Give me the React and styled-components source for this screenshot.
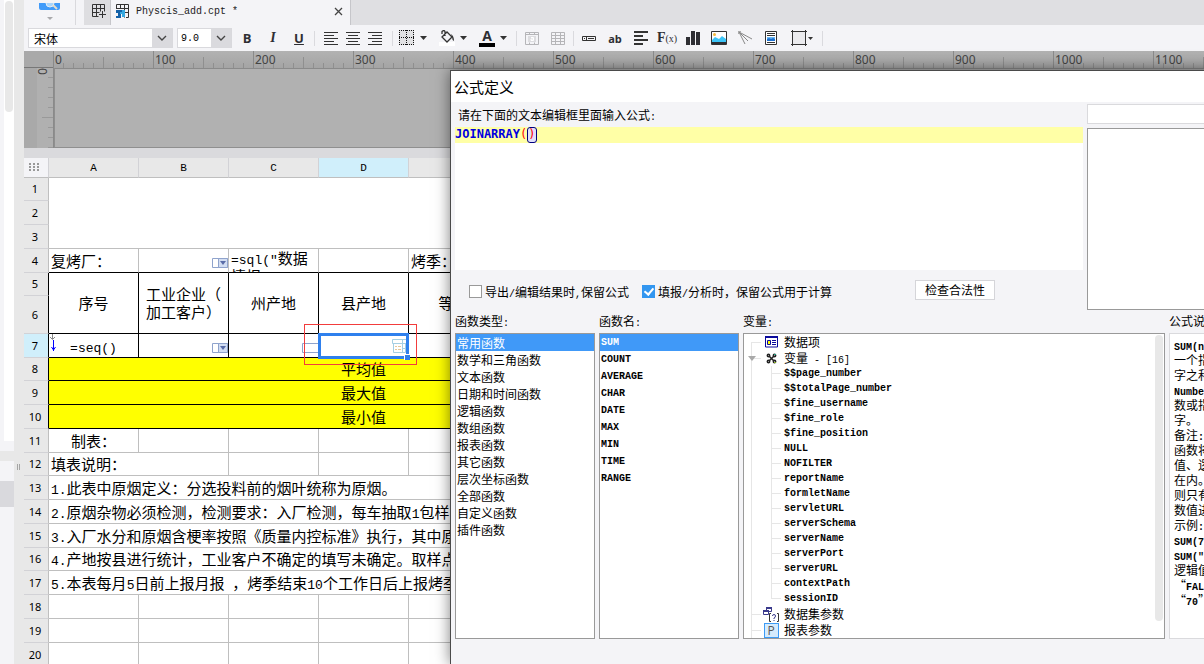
import React from "react";
import styled, { createGlobalStyle } from "styled-components";

const functionTypes = [
  "常用函数", "数学和三角函数", "文本函数", "日期和时间函数", "逻辑函数", "数组函数",
  "报表函数", "其它函数", "层次坐标函数", "全部函数", "自定义函数", "插件函数",
];

const functionNames = ["SUM", "COUNT", "AVERAGE", "CHAR", "DATE", "MAX", "MIN", "TIME", "RANGE"];

const variables = [
  "$$page_number", "$$totalPage_number", "$fine_username", "$fine_role", "$fine_position",
  "NULL", "NOFILTER", "reportName", "formletName", "servletURL", "serverSchema",
  "serverName", "serverPort", "serverURL", "contextPath", "sessionID",
];

const description = [
  "SUM(n", "一个指", "字之和", "Numbe", "数或指", "字。", "备注:", "函数将", "值、逻", "在内。",
  "则只有", "数值进", "示例:", "SUM(7", 'SUM("', "逻辑值", "“FAL", "“70”",
];

const notes = [
  { row: 13, height: 24, text: "1.此表中原烟定义：分选投料前的烟叶统称为原烟。" },
  { row: 14, height: 24, text: "2.原烟杂物必须检测，检测要求：入厂检测，每车抽取1包样" },
  { row: 15, height: 24, text: "3.入厂水分和原烟含梗率按照《质量内控标准》执行，其中原" },
  { row: 16, height: 23, text: "4.产地按县进行统计，工业客户不确定的填写未确定。取样点" },
  { row: 17, height: 24, text: "5.本表每月5日前上报月报 ，烤季结束10个工作日后上报烤季" },
];

// half-width characters are set in a smaller mono face than the CJK text
function Mixed({ children, size = 10, bold }) {
  return children.split(/([\x20-\x7e]+)/).map((part, i) =>
    i % 2 ? <Latin key={i} $size={size} $bold={bold}>{part}</Latin> : part
  );
}

export default function App() {
  return (
    <>
      <GlobalStyle />
      <Screen>
        <SidePanel />
        <Designer>
          <TabBar />
          <Toolbar />
          <RulerArea />
          <Gutter />
          <Sheet />
        </Designer>
        <FormulaDialog />
      </Screen>
    </>
  );
}

function SidePanel() {
  return (
    <Side>
      <SideTop>
        <SideTrack><SideThumb /></SideTrack>
      </SideTop>
      <SideBar $height={10} $color="#f4f4f7" />
      <SideBar $height={10} $color="#e8e8e8" />
      <SideBar $height={20} $color="#f4f4f7" />
      <SideBar $height={26} $color="#d9d9dd" />
      <SideRest />
      <Splitter><i /><i /></Splitter>
    </Side>
  );
}

function TabBar() {
  return (
    <Tabs>
      <Preview type="button" aria-label="预览">
        <svg width="22" height="20" viewBox="0 0 22 20">
          <path d="M0 0h21v5q0 2-2 2H2q-2 0-2-2z" fill="#419bf9" />
          <circle cx="11" cy="0" r="4" fill="#a9d5fb" stroke="#e7edf2" />
          <path d="M14 2l4 4" stroke="#e7dcc9" strokeWidth="2" />
          <path d="M8 14h6l-3 3z" fill="#a9a9ac" />
        </svg>
      </Preview>
      <TabDivider />
      <NewTab type="button" aria-label="新建">
        <svg width="15" height="15" viewBox="0 0 15 15" fill="none" stroke="#333">
          <path d="M.5.5h12v7M.5.5v12h6M.5 4.5h12M.5 8.5h7M4.5.5v12M8.5.5v7M10.5 7v7M7 10.5h7" />
        </svg>
      </NewTab>
      <ActiveTab>
        <svg width="14" height="14" viewBox="0 0 14 14" fill="none">
          <path d="M.5 5V.5h12v13H10M.5 4.5h12M4.5.5v4M8.5.5v13M8 8.5h5" stroke="#333" />
          <path d="M0 6h7v3H5v5H0v-2h2V9H0z" fill="#1261a8" />
          <path d="M6 6h3v7H6v-3H4V8h2z" fill="#35a8e0" />
        </svg>
        <TabTitle>Physcis_add.cpt *</TabTitle>
        <CloseTab type="button" aria-label="关闭">
          <svg width="9" height="9" viewBox="0 0 9 9" stroke="#444" strokeWidth="1.3">
            <path d="M1 1l7 7M8 1l-7 7" />
          </svg>
        </CloseTab>
      </ActiveTab>
    </Tabs>
  );
}

const Caret = () => (
  <svg width="7" height="4" viewBox="0 0 7 4"><path d="M0 0h7L3.500 4z" fill="#333" /></svg>
);

const Chevron = () => (
  <svg width="20" height="18" viewBox="0 0 20 18" fill="none" stroke="#444" strokeWidth="1.4">
    <path d="M6 7l4 4 4-4" />
  </svg>
);

function AlignIcon({ type }) {
  const short = { left: "M0 3.500h10M0 9.500h10", center: "M2 3.500h10M2 9.500h10", right: "M4 3.500h10M4 9.500h10" };
  return (
    <svg width="14" height="13" viewBox="0 0 14 13" stroke="#333">
      <path d={"M0 .5h14M0 6.500h14M0 12.500h14" + short[type]} />
    </svg>
  );
}

function Toolbar() {
  return (
    <Bar>
      <Combo $width={145}>
        <select aria-label="字体" defaultValue="宋体"><option>宋体</option></select>
        <Chevron />
      </Combo>
      <Combo $width={55} $mono>
        <select aria-label="字号" defaultValue="9.0"><option>9.0</option></select>
        <Chevron />
      </Combo>
      <Group>
        <Tool type="button"><b>B</b></Tool>
        <Tool type="button"><Italic>I</Italic></Tool>
        <Tool type="button"><Underlined>U</Underlined></Tool>
      </Group>
      <Sep />
      <AlignGroup>
        <AlignTool type="button" aria-label="左对齐"><AlignIcon type="left" /></AlignTool>
        <AlignTool type="button" aria-label="居中"><AlignIcon type="center" /></AlignTool>
        <AlignTool type="button" aria-label="右对齐"><AlignIcon type="right" /></AlignTool>
      </AlignGroup>
      <Sep />
      <DropGroup>
        <DropTool type="button" aria-label="边框">
          <svg width="16" height="16" viewBox="0 0 16 16" shapeRendering="crispEdges">
            <path d="M0 0h15v15H0z" fill="#e2e2e4" />
            <path d="M0 .5h15M0 7.500h15M0 14.500h15M.5 0v15M7.500 0v15M14.500 0v15" stroke="#111" strokeDasharray="1 1" />
          </svg>
          <Caret />
        </DropTool>
        <DropTool type="button" aria-label="背景色">
          <svg width="16" height="16" viewBox="0 0 16 16" fill="none" stroke="#333">
            <path d="M0 12h16v4H0z" fill="#fff" stroke="none" />
            <path d="M3 7l5-5 5 5-5 5zM3 4V1.500q2-2 3 0V6" strokeWidth="1.300" />
            <path d="M12 4q3 2 3 7-2-1-2-4z" fill="#333" stroke="none" />
          </svg>
          <Caret />
        </DropTool>
        <DropTool type="button" aria-label="文字颜色">
          <LetterA>A</LetterA>
          <Caret />
        </DropTool>
      </DropGroup>
      <Sep />
      <Group>
        <Tool type="button" aria-label="合并单元格">
          <svg width="14" height="13" viewBox="0 0 14 13" fill="none" stroke="#b5b5b8">
            <path d="M.5 .5h13v12H.5zM.5 2.500h13M4.500 .5v2M9.500 .5v2M4.500 10.500v2M9.500 10.500v2" />
            <path d="M3 4h8v6H3z" fill="#dcdcdf" stroke="none" />
            <path d="M6 5.500h2.500v3H6V7h2" stroke="#fff" />
          </svg>
        </Tool>
        <Tool type="button" aria-label="拆分单元格">
          <svg width="14" height="13" viewBox="0 0 14 13" fill="none" stroke="#b5b5b8">
            <path d="M.5 .5h13v12H.5zM.5 3.500h13M.5 6.500h13M.5 9.500h13M4.500 .5v12M9.500 .5v12" />
          </svg>
        </Tool>
      </Group>
      <Sep />
      <Group>
        <Tool type="button" aria-label="控件">
          <svg width="14" height="5" viewBox="0 0 14 5" fill="none" stroke="#333">
            <path d="M.5 .5h13v4H.5zM4.500 .5v4M6 2.500h6M2 2.500h1" />
          </svg>
        </Tool>
        <Tool type="button"><SmallLabel>ab</SmallLabel></Tool>
        <Tool type="button" aria-label="富文本">
          <svg width="14" height="14" viewBox="0 0 14 14" stroke="#333" strokeWidth="2">
            <path d="M0 1h14M0 5h9M0 9h14M0 13h9" />
          </svg>
        </Tool>
        <Tool type="button"><Fx>F<small>(x)</small></Fx></Tool>
        <Tool type="button" aria-label="图表">
          <svg width="14" height="14" viewBox="0 0 14 14" fill="#2e2e33">
            <path d="M0 6h4v8H0zM5 0h4v14H5zM10 1h4v13h-4z" />
          </svg>
        </Tool>
        <Tool type="button" aria-label="图片">
          <svg width="16" height="14" viewBox="0 0 16 14">
            <path d="M.5 .5h15v13H.5z" fill="#fff" stroke="#333" />
            <path d="M1 11V9l3-3 4 2 3-3 4 3v3z" fill="#3cc4f7" />
            <path d="M1 11h14v2H1z" fill="#2e2e33" />
            <circle cx="3.500" cy="3.500" r="1.500" fill="#f5b83d" />
          </svg>
        </Tool>
        <Tool type="button" aria-label="斜线">
          <svg width="14" height="14" viewBox="0 0 14 14" fill="none" stroke="#888">
            <path d="M1 1l6 12M1 1l13 7M1 1l9 9" />
            <path d="M0 .5h3M.5 0v3" stroke="#aaa" />
          </svg>
        </Tool>
        <Tool type="button" aria-label="子报表">
          <svg width="12" height="14" viewBox="0 0 12 14" fill="none" stroke="#333">
            <path d="M.5 .5h11v13H.5z" fill="#fff" />
            <path d="M2 2.500h8M2 4.500h8M2 11.500h8" />
            <path d="M2 6h8v4H2z" fill="#6bb8f5" stroke="none" />
            <path d="M2 10V8l2-1 2 1 2-1 2 1v2z" fill="#1a6fd0" stroke="none" />
          </svg>
        </Tool>
        <Tool type="button" aria-label="悬浮元素" $width={34}>
          <svg width="22" height="16" viewBox="0 0 22 16" fill="none" stroke="#333">
            <path d="M1.500 1.500h13v13h-13z" fill="#ebebee" />
            <path d="M0 1.500h16M0 14.500h16M1.500 0v16M14.500 0v16" />
            <path d="M17 7h5l-2.500 3z" fill="#333" stroke="none" />
          </svg>
        </Tool>
      </Group>
      <Sep />
    </Bar>
  );
}

function RulerArea() {
  return (
    <Rulers>
      <RulerCorner />
      <TopRuler>
        {[...Array(12)].map((_, i) => <span key={i}>{i * 100}</span>)}
      </TopRuler>
      <LeftRuler><span>0</span></LeftRuler>
      <Canvas />
    </Rulers>
  );
}

const ComboWidget = () => (
  <Widget>
    <svg width="16" height="11" viewBox="0 0 16 11">
      <path d="M.5 .5h15v9H.5z" fill="#fff" stroke="#8fa3cc" />
      <path d="M6.500 .5h9v9h-9z" fill="#d3def2" stroke="#8fa3cc" />
      <path d="M8 3h6l-3 4z" fill="#5a6da8" />
    </svg>
  </Widget>
);

function Sheet() {
  return (
    <Table>
      <colgroup>
        <HeadCol />
        {[...Array(7)].map((_, i) => <DataCol key={i} />)}
      </colgroup>
      <thead>
        <tr>
          <Corner>
            <svg width="11" height="9" viewBox="0 0 11 9" fill="#999">
              <path d="M0 0h2v2H0zM4 0h2v2H4zM8 0h2v2H8zM0 3h2v2H0zM4 3h2v2H4zM8 3h2v2H8zM0 6h2v2H0zM4 6h2v2H4zM8 6h2v2H8z" />
            </svg>
          </Corner>
          {["A", "B", "C", "D", "E", "F", "G"].map((c) => (
            <ColHead key={c} $active={c === "D"}>{c}</ColHead>
          ))}
        </tr>
      </thead>
      <tbody>
        <tr><RowHead $height={23}>1</RowHead><Cell colSpan={7} rowSpan={3} /></tr>
        <tr><RowHead $height={24}>2</RowHead></tr>
        <tr><RowHead $height={24}>3</RowHead></tr>
        <tr>
          <RowHead $height={24}>4</RowHead>
          <Cell $under>复烤厂：</Cell>
          <Cell $under><ComboWidget /></Cell>
          <Cell $under><Clip><Mixed size={13}>{'=sql("数据'}</Mixed><br /><Mixed size={13}>{'情报","'}</Mixed></Clip></Cell>
          <Cell $under />
          <Cell $under>烤季：</Cell>
          <Cell $under />
          <Cell $under />
        </tr>
        <tr>
          <RowHead $height={23} $dark>5</RowHead>
          <Cell rowSpan={2} $dark $center>序号</Cell>
          <Cell rowSpan={2} $dark $center>工业企业（<br />加工客户）</Cell>
          <Cell rowSpan={2} $dark $center>州产地</Cell>
          <Cell rowSpan={2} $dark $center>县产地</Cell>
          <Cell rowSpan={2} $dark $center>等级</Cell>
          <Cell rowSpan={2} $dark />
          <Cell rowSpan={2} $dark />
        </tr>
        <tr><RowHead $height={38} $dark>6</RowHead></tr>
        <tr>
          <RowHead $height={24} $dark $active>7</RowHead>
          <Cell $dark $center>
            <ExpandMark>
              <svg width="8" height="18" viewBox="0 0 8 18" fill="none">
                <path d="M3.500 0v5M1 3l2.500 2.500L6 3" stroke="#888" />
                <path d="M4.500 6v11M2.500 13l2 3 2-3" stroke="#00f" />
              </svg>
            </ExpandMark>
            <Mixed size={13}>=seq()</Mixed>
          </Cell>
          <Cell $dark><ComboWidget /></Cell>
          <Cell $dark>
            <Widget>
              <svg width="16" height="11" viewBox="0 0 16 11">
                <path d="M.5 .5h16v9H.5z" fill="#fff" stroke="#8fa3cc" />
              </svg>
            </Widget>
          </Cell>
          <Cell $dark>
            <Widget>
              <svg width="16" height="15" viewBox="0 0 16 15" fill="none" stroke="#a5cfe3">
                <path d="M.5 .5h14v4H.5zM10.500 .5v13M1.500 4.500v9h12v-9M11 9.500h3" />
                <path d="M3 7.500h2M6 7.500h3M3 10.500h2M6 10.500h3" stroke="#e5c79a" />
              </svg>
            </Widget>
            <Selection />
            <RedMark />
          </Cell>
          <Cell $dark /><Cell $dark /><Cell $dark />
        </tr>
        <tr><RowHead $height={23} $dark>8</RowHead><Cell colSpan={7} $dark $center $yellow>平均值</Cell></tr>
        <tr><RowHead $height={24} $dark>9</RowHead><Cell colSpan={7} $dark $center $yellow>最大值</Cell></tr>
        <tr><RowHead $height={24} $dark>10</RowHead><Cell colSpan={7} $dark $center $yellow>最小值</Cell></tr>
        <tr>
          <RowHead $height={24}>11</RowHead>
          <Cell $center>制表：</Cell>
          <Cell /><Cell /><Cell /><Cell /><Cell /><Cell />
        </tr>
        <tr>
          <RowHead $height={23}>12</RowHead>
          <Cell colSpan={2}>填表说明：</Cell>
          <Cell /><Cell /><Cell /><Cell /><Cell />
        </tr>
        {notes.map((n) => (
          <tr key={n.row}>
            <RowHead $height={n.height}>{n.row}</RowHead>
            <Cell colSpan={7}><Mixed size={13}>{n.text}</Mixed></Cell>
          </tr>
        ))}
        {[18, 19, 20].map((n) => (
          <tr key={n}>
            <RowHead $height={24}>{n}</RowHead>
            <Cell /><Cell /><Cell /><Cell /><Cell /><Cell /><Cell />
          </tr>
        ))}
      </tbody>
    </Table>
  );
}

function FormulaDialog() {
  return (
    <Dialog role="dialog" aria-labelledby="formula-title">
      <DialogTitle id="formula-title">公式定义</DialogTitle>
      <Upper>
        <EditorSide>
          <EditorLabel id="editor-label"><Mixed>请在下面的文本编辑框里面输入公式:</Mixed></EditorLabel>
          <Editor role="textbox" aria-labelledby="editor-label" contentEditable suppressContentEditableWarning>
            <EditorLine>JOINARRAY<Paren>(</Paren><Matched>)</Matched></EditorLine>
          </Editor>
          <Options>
            <Check>
              <input type="checkbox" />
              <span><Mixed>导出/编辑结果时,保留公式</Mixed></span>
            </Check>
            <Check>
              <input type="checkbox" defaultChecked />
              <span><Mixed>填报/分析时，保留公式用于计算</Mixed></span>
            </Check>
            <CheckButton type="button">检查合法性</CheckButton>
          </Options>
        </EditorSide>
        <SearchSide>
          <Search type="text" aria-label="搜索" />
          <Results />
        </SearchSide>
      </Upper>
      <Lower>
        <Column>
          <Caption><Mixed>函数类型:</Mixed></Caption>
          <List>
            {functionTypes.map((t, i) => (
              <li key={t}><Item type="button" $selected={i === 0}>{t}</Item></li>
            ))}
          </List>
        </Column>
        <Column>
          <Caption><Mixed>函数名:</Mixed></Caption>
          <List>
            {functionNames.map((t, i) => (
              <li key={t}><NameItem type="button" $selected={i === 0}>{t}</NameItem></li>
            ))}
          </List>
        </Column>
        <Column>
          <Caption><Mixed>变量:</Mixed></Caption>
          <TreePanel>
            <Tree>
              <TreeNode>
                <NodeIcon>
                  <svg width="13" height="12" viewBox="0 0 13 12" fill="none">
                    <path d="M.5 1h12v10H.5z" fill="#fff" stroke="#0a0a9c" />
                    <path d="M0 1h13" stroke="#0a0a9c" strokeWidth="2" />
                    <path d="M2.500 4.500h3v4h-3z" fill="#ff0" stroke="#0a0a9c" />
                    <path d="M7 4.500h4M7 6.500h4M7 8.500h4" stroke="#0a0a9c" />
                  </svg>
                </NodeIcon>
                数据项
              </TreeNode>
              <TreeNode>
                <NodeIcon>
                  <svg width="11" height="11" viewBox="0 0 11 11" fill="none" stroke="#222" strokeWidth="1.500">
                    <circle cx="2.500" cy="2.500" r="1.200" />
                    <circle cx="8.500" cy="2.500" r="1.200" />
                    <circle cx="2.500" cy="8.500" r="1.200" />
                    <circle cx="8.500" cy="8.500" r="1.200" />
                    <path d="M3 3l5 5M8 3L3 8" />
                    <path d="M9 1v1" stroke="#2b9" />
                    <path d="M9 9v1" stroke="#ad2" />
                  </svg>
                </NodeIcon>
                <span><Mixed>变量 - [16]</Mixed></span>
                <Toggle type="button" aria-label="折叠">
                  <svg width="8" height="5" viewBox="0 0 8 5"><path d="M0 0h8L4 5z" fill="#a9a9a9" /></svg>
                </Toggle>
              </TreeNode>
              <Leaves>
                {variables.map((v) => <Leaf key={v}>{v}</Leaf>)}
              </Leaves>
              <TreeNode>
                <NodeIcon>
                  <svg width="16" height="15" viewBox="0 0 16 15" fill="none" stroke="#3a3a8c">
                    <path d="M3.500 1.500h5v3h-5zM.5 4.500h5v3h-5z" fill="#fff" />
                    <path d="M3 1h6M0 4h6" strokeWidth="2" />
                    <path d="M8 6.500H6.500v8H8M14 6.500h1.500v8H14" stroke="#333" />
                    <path d="M9.500 9q0-1.500 1.500-1.500t1.500 1.500-1.500 2v1M11 13v1" />
                  </svg>
                </NodeIcon>
                数据集参数
              </TreeNode>
              <TreeNode>
                <NodeIcon><ParamBadge>P</ParamBadge></NodeIcon>
                报表参数
              </TreeNode>
            </Tree>
            <TreeTrack><TreeThumb /></TreeTrack>
          </TreePanel>
        </Column>
        <Column>
          <Caption>公式说明</Caption>
          <Description>
            {description.map((line, i) => <p key={i}><Mixed bold>{line}</Mixed></p>)}
          </Description>
        </Column>
      </Lower>
    </Dialog>
  );
}

const cjk = '"Noto Sans CJK SC", sans-serif';
const mono = '"Liberation Mono", "Noto Sans CJK SC", monospace';

const GlobalStyle = createGlobalStyle`
  * {
    box-sizing: border-box;
  }

  body {
    margin: 0;
    font-family: ${cjk};
    font-size: 12px;
    color: #000;
    background: #f4f4f7;
  }

  button {
    border: 0;
    padding: 0;
    background: none;
    font: inherit;
    color: inherit;
  }

  ul, p {
    margin: 0;
    padding: 0;
    list-style: none;
  }

  svg {
    display: block;
    flex: none;
  }
`;

const Latin = styled.span`
  font-family: ${mono};
  font-size: ${(p) => p.$size}px;
  font-weight: ${(p) => (p.$bold ? 700 : 400)};
  line-height: 1;
`;

const Screen = styled.div`
  display: flex;
  position: relative;
  height: 100vh;
  overflow: hidden;
`;

// SIDE PANEL

const Side = styled.div`
  display: grid;
  grid-template-columns: 14px 10px;
  grid-template-rows: 441px 10px 10px 20px 26px 1fr;
  flex: none;
`;

const SideTop = styled.div`
  background: #f4f4f7;
  padding-left: 4px;
`;

const SideTrack = styled.div`
  height: 100%;
  padding: 1px;
  background: #fff;
`;

const SideThumb = styled.div`
  height: 111px;
  border-radius: 4px;
  background: #e8e8e8;
`;

const SideBar = styled.div`
  grid-column: 1;
  height: ${(p) => p.$height}px;
  background: ${(p) => p.$color};
`;

const SideRest = styled.div`
  grid-column: 1;
  background: #f4f4f7;
`;

const Splitter = styled.div`
  grid-column: 2;
  grid-row: 1 / -1;
  display: flex;
  gap: 1px;
  padding: 464px 0 0 3px;
  background: #e8e8e8;

  i {
    width: 1px;
    height: 6px;
    background: #a5a5a5;
  }
`;

const Designer = styled.div`
  display: flex;
  flex-direction: column;
  flex: 1;
  min-width: 0;
`;

// TABS

const Tabs = styled.div`
  display: flex;
  height: 25px;
  flex: none;
  background: #dfdfe2;
`;

const Preview = styled.button`
  width: 51px;
  padding-left: 15px;
  background: #f4f4f7;
`;

const TabDivider = styled.div`
  width: 9px;
  background: #f4f4f7;
  border-left: 1px solid #d9d9dd;
`;

const NewTab = styled.button`
  display: flex;
  width: 27px;
  padding: 4px 0 0 8px;
  background: #dedee1;
  border-right: 1px solid #c6c6ca;
`;

const ActiveTab = styled.div`
  display: flex;
  align-items: center;
  width: 240px;
  padding: 0 7px 3px 5px;
  background: #f4f4f7;
  border-right: 1px solid #c6c6ca;
`;

const TabTitle = styled.span`
  flex: 1;
  padding-left: 6px;
  font-family: ${mono};
  font-size: 10px;
  color: #222;
`;

const CloseTab = styled.button`
  width: 9px;
  height: 9px;
`;

// TOOLBAR

const Bar = styled.div`
  display: flex;
  align-items: center;
  height: 26px;
  flex: none;
  padding-left: 4px;
  background: #f4f4f7;
`;

const Combo = styled.div`
  display: flex;
  width: ${(p) => p.$width}px;
  height: 20px;
  margin-right: ${(p) => (p.$mono ? 3 : 4)}px;
  border: 1px solid #d9d9dd;
  background: #dadade;

  select {
    flex: 1;
    min-width: 0;
    padding: 0 ${(p) => (p.$mono ? 3 : 5)}px;
    border: 0;
    appearance: none;
    background: #fff;
    color: #000;
    font-family: ${(p) => (p.$mono ? mono : cjk)};
    font-size: ${(p) => (p.$mono ? 10 : 12)}px;
  }
`;

const Group = styled.div`
  display: flex;
  gap: 2px;
`;

const AlignGroup = styled(Group)`
  gap: 0;
  padding: 0 3px 0 2px;
`;

const DropGroup = styled(Group)`
  gap: 3px;
`;

const Tool = styled.button`
  display: flex;
  align-items: center;
  justify-content: center;
  width: ${(p) => p.$width || 24}px;
  height: 22px;
  font-family: "Open Sans", sans-serif;
  font-size: 13px;
  color: #2e2e33;
`;

const AlignTool = styled(Tool)`
  width: 22px;
`;

const DropTool = styled(Tool)`
  justify-content: flex-start;
  gap: 5px;
  width: 37px;
  padding-left: 3px;
`;

const Italic = styled.i`
  font-family: "Liberation Serif", serif;
  font-size: 14px;
  font-weight: 700;
`;

const Underlined = styled.u`
  font-weight: 700;
`;

const LetterA = styled.span`
  width: 16px;
  height: 17px;
  border-bottom: 4px solid #000;
  font-size: 14px;
  font-weight: 700;
  line-height: 12px;
`;

const SmallLabel = styled.span`
  font-size: 11px;
  font-weight: 700;
`;

const Fx = styled.span`
  font-family: "Liberation Serif", serif;
  font-size: 14px;
  font-weight: 700;

  small {
    font-size: 10px;
    font-weight: 400;
  }
`;

const Sep = styled.div`
  width: 1px;
  height: 15px;
  margin: 0 3px;
  background: #dadade;
`;

// RULERS

const Rulers = styled.div`
  display: grid;
  grid-template-columns: 30px 1fr;
  grid-template-rows: 17px 80px;
  flex: none;
  color: #444;
  font-family: "Noto Sans", sans-serif;
  font-size: 12px;
`;

const RulerCorner = styled.div`
  background: #a9a9a9;
  border-right: 1px solid #666;
  border-bottom: 1px solid #777;
`;

const TopRuler = styled.div`
  display: flex;
  overflow: hidden;
  margin-left: -1px;
  background:
    repeating-linear-gradient(90deg, #8a8a8a 0 1px, transparent 1px 100px) 0 0 / 100% 17px no-repeat,
    repeating-linear-gradient(90deg, transparent 0 50px, #8f8f8f 50px 51px, transparent 51px 100px) 0 6px / 100% 11px no-repeat,
    repeating-linear-gradient(90deg, #8f8f8f 0 1px, transparent 1px 10px) 0 12px / 100% 5px no-repeat,
    linear-gradient(#b2b2b2, #a4a4a4);

  span {
    width: 100px;
    flex: none;
    padding-left: 2px;
    line-height: 17px;
  }
`;

const LeftRuler = styled.div`
  padding: 0 0 0 13px;
  border-right: 1px solid #8a8a8a;
  background:
    linear-gradient(#999, #999) 18px 49px / 11px 1px no-repeat,
    repeating-linear-gradient(transparent 0 9px, #999 9px 10px) 24px 0 / 5px 100% no-repeat,
    linear-gradient(90deg, #a9a9a9 13px, #b0b0b0 13px);

  span {
    display: block;
    width: 11px;
    line-height: 12px;
    writing-mode: vertical-rl;
  }
`;

const Canvas = styled.div`
  border-top: 1px solid #8a8a8a;
  border-bottom: 1px solid #8f8f8f;
  border-left: 1px solid #8f8f8f;
  background: #b1b1b1;
`;

const Gutter = styled.div`
  height: 10px;
  flex: none;
  background: #dadadd;
`;

// SHEET

const Table = styled.table`
  width: 655px;
  table-layout: fixed;
  border-spacing: 0;
  background: #fff;
`;

const HeadCol = styled.col`
  width: 25px;
`;

const DataCol = styled.col`
  width: 90px;
`;

const ColHead = styled.th`
  height: 20px;
  padding: 0;
  border-right: 1px solid #d2d2d6;
  border-bottom: 1px solid #bfbfbf;
  background: ${(p) => (p.$active ? "#d0effb" : "#e8e8e8")};
  font-family: ${mono};
  font-size: 11px;
  font-weight: 400;
`;

const Corner = styled(ColHead)`
  padding-left: 5px;
  background: #f4f4f7;
`;

const RowHead = styled.th`
  height: ${(p) => p.$height}px;
  padding: 0 2px 0 0;
  border-right: 1px solid ${(p) => (p.$dark ? "#000" : "#bfbfbf")};
  border-bottom: 1px solid #d2d2d6;
  background: ${(p) => (p.$active ? "#d0effb" : "#e8e8e8")};
  font-family: "Noto Sans", sans-serif;
  font-size: 11px;
  font-weight: 400;
  line-height: 14px;
`;

const Cell = styled.td`
  position: relative;
  padding: 0 2px;
  border-right: 1px solid ${(p) => (p.$dark ? "#000" : "#bfbfbf")};
  border-bottom: 1px solid ${(p) => (p.$dark || p.$under ? "#000" : "#bfbfbf")};
  background: ${(p) => (p.$yellow ? "#ff0" : "#fff")};
  font-size: 15px;
  line-height: 18px;
  text-align: ${(p) => (p.$center ? "center" : "left")};
  white-space: nowrap;
`;

const Clip = styled.div`
  height: 23px;
  overflow: hidden;
  line-height: 18px;
`;

const Widget = styled.span`
  position: absolute;
  right: 0;
  bottom: 3px;
`;

const ExpandMark = styled.span`
  position: absolute;
  left: 0;
  top: 0;
`;

const Selection = styled.span`
  position: absolute;
  z-index: 1;
  inset: -1px -1px -2px -1px;
  border: 3px solid #2f80ed;

  &::after {
    content: "";
    position: absolute;
    right: -4px;
    bottom: -4px;
    width: 5px;
    height: 5px;
    border: 1px solid #fff;
    border-width: 1px 0 0 1px;
    background: #2f80ed;
  }
`;

const RedMark = styled.span`
  position: absolute;
  z-index: 2;
  inset: -10px -9px -8px -15px;
  border: 1px solid #f23c3c;
`;

// DIALOG

const Dialog = styled.div`
  position: absolute;
  z-index: 5;
  left: 450px;
  right: -200px;
  top: 70px;
  bottom: 0;
  display: flex;
  flex-direction: column;
  border: 1px solid #4a4a4a;
  border-bottom: 0;
  background: #f4f4f7;
  box-shadow: 0 0 14px rgba(0, 0, 0, 0.5);
`;

const DialogTitle = styled.div`
  height: 31px;
  flex: none;
  padding-left: 3px;
  background: #fff;
  font-size: 15px;
  line-height: 31px;
`;

const Upper = styled.div`
  display: grid;
  grid-template-columns: 1fr 313px;
  gap: 4px;
  flex: none;
  padding: 2px 3px 0 4px;
`;

const EditorSide = styled.div`
  display: flex;
  flex-direction: column;
`;

const EditorLabel = styled.div`
  height: 23px;
  padding-left: 3px;
  line-height: 22px;
`;

const Editor = styled.div`
  height: 143px;
  background: #fff;
  outline: 0;
`;

const EditorLine = styled.div`
  display: flex;
  height: 16px;
  background: #ffffa6;
  color: #0000e0;
  font-family: "DejaVu Sans Mono", monospace;
  font-size: 12px;
  font-weight: 700;
  line-height: 14px;
`;

const Paren = styled.span`
  color: #f00;
  font-weight: 400;
`;

const Matched = styled(Paren)`
  height: 16px;
  border: 1px solid #000080;
  border-radius: 3px;
  background: #e0e0fa;
  line-height: 12px;
`;

const Options = styled.div`
  display: flex;
  align-items: center;
  height: 40px;
  padding-left: 14px;
`;

const Check = styled.label`
  display: flex;
  align-items: center;
  gap: 3px;
  margin-right: 13px;
  padding-top: 2px;
  white-space: nowrap;

  input {
    width: 13px;
    height: 13px;
    margin: 0;
    appearance: none;
    border: 1px solid #999;
    background: #fff;
  }

  input:checked {
    border-color: #3296f0;
    background: #3296f0;
  }

  input:checked::after {
    content: "";
    display: block;
    width: 4px;
    height: 7px;
    margin: 0 0 0 3px;
    border: solid #fff;
    border-width: 0 2px 2px 0;
    transform: rotate(40deg);
  }
`;

const CheckButton = styled.button`
  width: 80px;
  height: 20px;
  margin-left: 70px;
  border: 1px solid #d5d5d9;
  background: #fff;
  line-height: 18px;
`;

const SearchSide = styled.div`
  display: flex;
  flex-direction: column;
  gap: 4px;
`;

const Search = styled.input`
  width: 100%;
  height: 20px;
  border: 1px solid #dadadd;
  background: #fff;
`;

const Results = styled.div`
  flex: 1;
  border: 1px solid #999;
  background: #fff;
`;

const Lower = styled.div`
  display: grid;
  grid-template-columns: 140px 140px 1fr 231px;
  gap: 4px;
  flex: 1;
  min-height: 0;
  padding: 0 3px 25px 4px;
`;

const Column = styled.div`
  display: flex;
  flex-direction: column;
  min-width: 0;
  min-height: 0;
`;

const Caption = styled.div`
  height: 23px;
  flex: none;
  line-height: 21px;
`;

const List = styled.ul`
  flex: 1;
  border: 1px solid #999;
  background: #fff;
`;

const Item = styled.button`
  display: block;
  width: 100%;
  height: 17px;
  padding-left: 1px;
  background: ${(p) => (p.$selected ? "#4099f8" : "transparent")};
  color: ${(p) => (p.$selected ? "#fff" : "#000")};
  line-height: 17px;
  text-align: left;
`;

const NameItem = styled(Item)`
  font-family: ${mono};
  font-size: 10px;
  font-weight: 700;
`;

const TreePanel = styled.div`
  display: flex;
  flex: 1;
  min-height: 0;
  border: 1px solid #999;
  background: #fff;
`;

const Tree = styled.ul`
  flex: 1;
  overflow: hidden;
  background: linear-gradient(#e6e6e6, #e6e6e6) 7px 8px / 1px 100% no-repeat;
`;

const TreeNode = styled.li`
  position: relative;
  display: flex;
  align-items: center;
  height: 16px;
  padding-left: 18px;
  line-height: 16px;
  white-space: pre;
  background: linear-gradient(#e6e6e6, #e6e6e6) 7px 8px / 10px 1px no-repeat;
`;

const NodeIcon = styled.span`
  display: flex;
  justify-content: center;
  width: 18px;
  margin-right: 4px;
`;

const Toggle = styled.button`
  position: absolute;
  left: 4px;
  top: 6px;
`;

const Leaves = styled.ul`
  padding-left: 27px;
`;

const Leaf = styled.li`
  height: 15px;
  padding-left: 13px;
  background:
    linear-gradient(#e6e6e6, #e6e6e6) 0 7px / 10px 1px no-repeat,
    linear-gradient(#e6e6e6, #e6e6e6) 0 0 / 1px 100% no-repeat;
  font-family: ${mono};
  font-size: 10px;
  font-weight: 700;
  line-height: 15px;

  &:last-child {
    background:
      linear-gradient(#e6e6e6, #e6e6e6) 0 7px / 10px 1px no-repeat,
      linear-gradient(#e6e6e6, #e6e6e6) 0 0 / 1px 8px no-repeat;
  }
`;

const ParamBadge = styled.span`
  width: 15px;
  height: 15px;
  border: 1px solid #3c9bf5;
  background: #d5ebfd;
  color: #555;
  font-family: "Open Sans", sans-serif;
  line-height: 13px;
  text-align: center;
`;

const TreeTrack = styled.div`
  width: 9px;
  padding: 1px 1px 17px 0;
`;

const TreeThumb = styled.div`
  height: 100%;
  border-radius: 4px;
  background: #e8e8e8;
`;

const Description = styled.div`
  flex: 1;
  overflow: hidden;
  padding: 3px 4px;
  border: 1px solid #dadadd;
  background: #fff;
  line-height: 15px;
  white-space: nowrap;

  p {
    height: 15px;
  }
`;
